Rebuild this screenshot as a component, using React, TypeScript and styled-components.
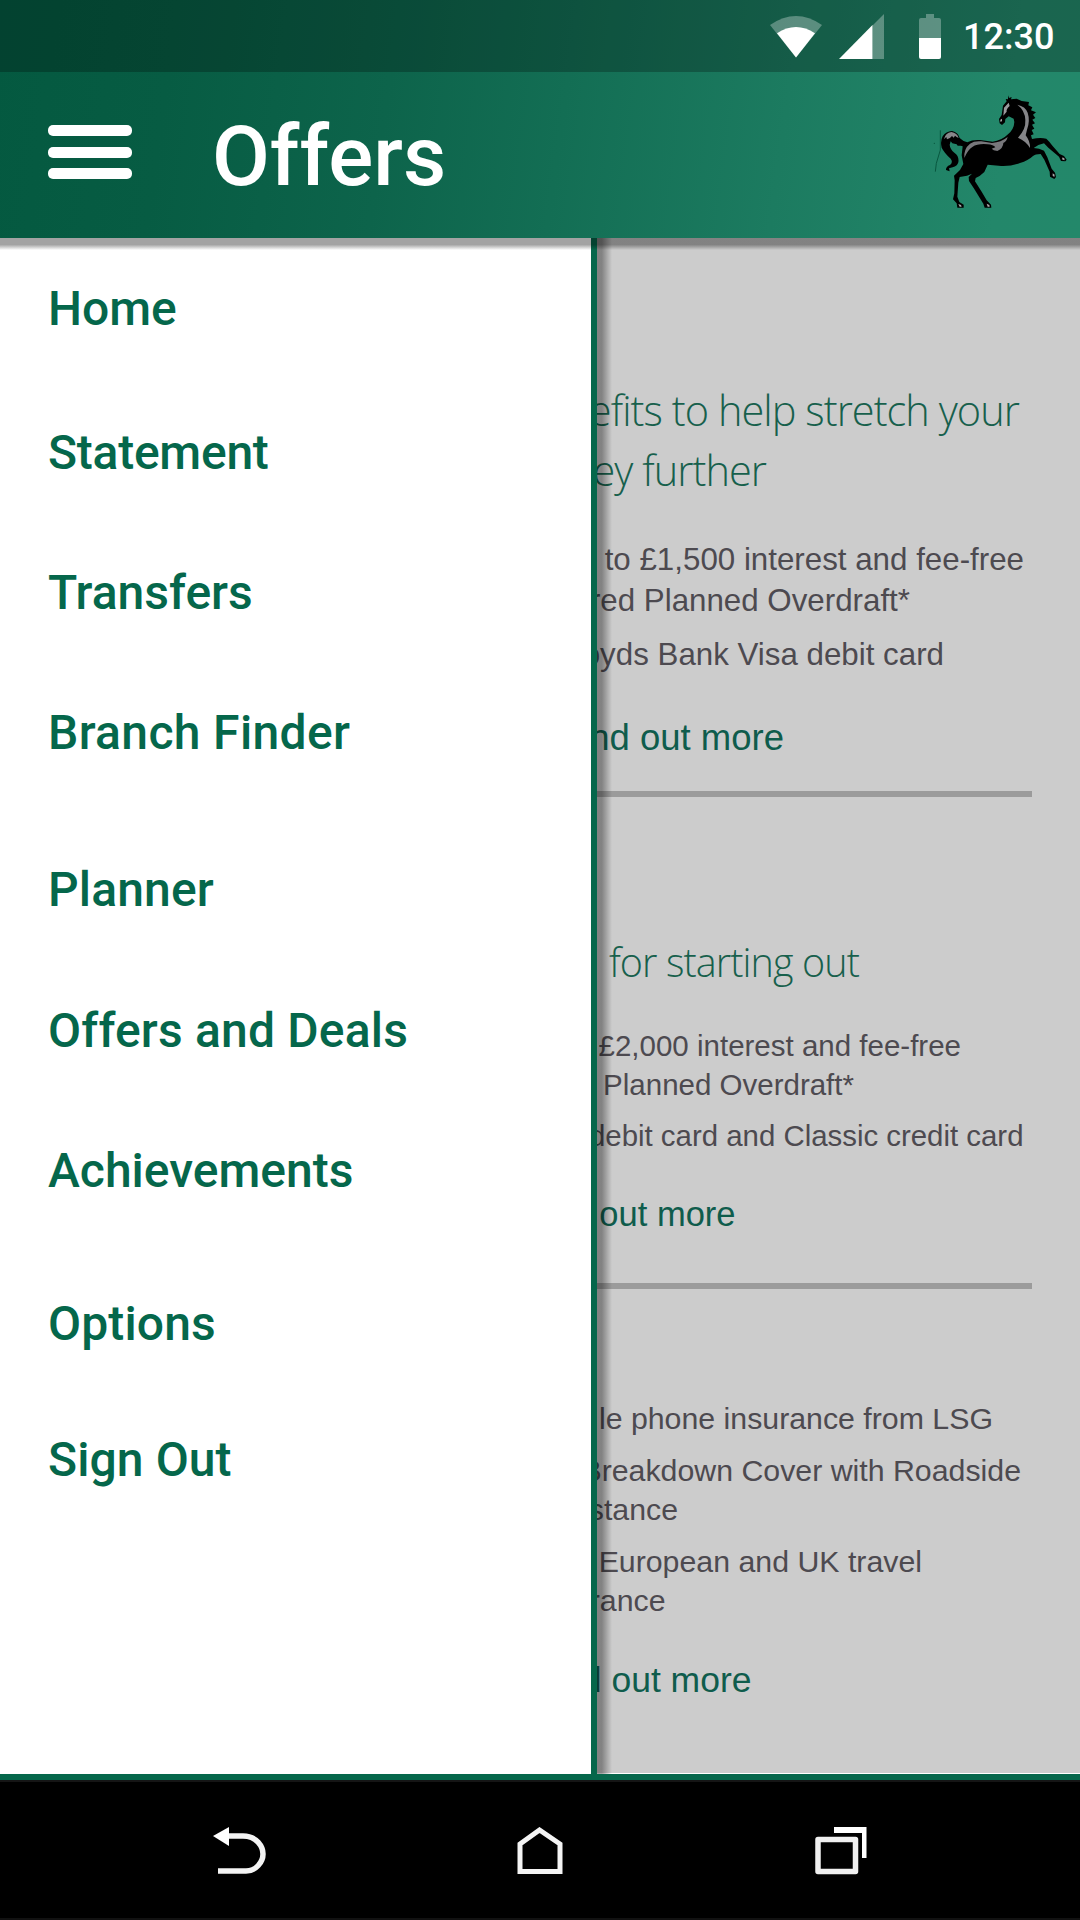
import React from "react";
import styled, { createGlobalStyle } from "styled-components";

const GREEN = "#05674b";

const Global = createGlobalStyle`
  * { box-sizing: border-box; }
  body { margin: 0; background: #000; font-family: Roboto, "Liberation Sans", sans-serif; }
`;

const Screen = styled.div`
  width: 1080px;
  height: 1920px;
  display: flex;
  flex-direction: column;
  overflow: hidden;
`;

const Top = styled.header`
  position: relative;
  z-index: 2;
  height: 238px;
  flex: none;
  display: flex;
  flex-direction: column;
  color: #fff;
  background: linear-gradient(98deg, #045940 0%, #075c43 16%, #0d644b 36%, #136e54 52%, #1c7b60 72%, #23876a 92%, #23886a 100%);

  &::after {
    content: "";
    position: absolute;
    left: 0;
    right: 0;
    top: 100%;
    height: 12px;
    background: linear-gradient(rgba(0, 0, 0, 0.36) 0 55%, rgba(0, 0, 0, 0));
  }
`;

const StatusBar = styled.div`
  height: 72px;
  display: flex;
  background: rgba(0, 0, 0, 0.25);
  padding-left: 770px;
`;

const Clock = styled.time`
  font-size: 36px;
  font-weight: 500;
  line-height: 74px;
  margin-left: 20px;
`;

const AppBar = styled.div`
  flex: 1;
  display: flex;
  align-items: flex-start;
`;

const MenuButton = styled.button`
  width: 84px;
  height: 54px;
  margin: 53px 0 0 48px;
  padding: 0;
  border: 0;
  background: none;
  display: flex;
  flex-direction: column;
  justify-content: space-between;
`;

const Bar = styled.span`
  display: block;
  height: 11px;
  border-radius: 5px;
  background: #fff;
`;

const Title = styled.h1`
  flex: 1;
  margin: 35px 0 0 80px;
  font-size: 84px;
  font-weight: 500;
  line-height: 100px;
`;

const Logo = styled.svg`
  width: 160px;
  height: 158px;
  margin-top: 8px;
`;

const Body = styled.div`
  height: 1536px;
  flex: none;
  display: flex;
`;

const Drawer = styled.nav`
  position: relative;
  z-index: 1;
  width: 597px;
  flex: none;
  padding: 43px 0 0 48px;
  background: #fff;
  border-right: 6px solid ${GREEN};

  &::after {
    content: "";
    position: absolute;
    top: 0;
    bottom: 0;
    left: 597px;
    width: 15px;
    background: linear-gradient(90deg, rgba(0, 0, 0, 0.36) 0 32%, rgba(0, 0, 0, 0));
  }
`;

const Item = styled.a<{ $gap: number; $ls: number }>`
  display: block;
  margin-top: ${(p) => p.$gap}px;
  font-size: 48px;
  font-weight: 500;
  line-height: 56px;
  letter-spacing: ${(p) => p.$ls}px;
  color: ${GREEN};
`;

const Content = styled.main`
  flex: 1;
  min-width: 0;
  overflow: hidden;
  background: #ccc;
  border-bottom: 1px solid #fff;
`;

type LineProps = { $gap: number; $end: number; $size: number; $ls?: number };

const Line = styled.div<LineProps>`
  display: flex;
  justify-content: flex-end;
  margin-top: ${(p) => p.$gap}px;
  padding-right: ${(p) => 1080 - p.$end}px;
  font-family: "Liberation Sans", Arial, sans-serif;
  font-size: ${(p) => p.$size}px;
  line-height: 36px;
  letter-spacing: ${(p) => p.$ls ?? 0}px;
  white-space: nowrap;
  color: #4d4a50;
`;

const Heading = styled(Line)`
  font-family: "Open Sans", "Noto Sans", sans-serif;
  font-weight: 360;
  color: #17604c;
`;

const More = styled(Line)`
  color: #0f5c4c;
`;

const Rule = styled.hr<{ $gap: number }>`
  height: 6px;
  margin: ${(p) => p.$gap}px 48px 0 0;
  border: 0;
  background: #9b9b9b;
`;

const NavBar = styled.footer`
  height: 146px;
  flex: none;
  display: flex;
  padding: 47px 0 0 205px;
  background: #000;
  border-top: 6px solid ${GREEN};
  box-shadow: inset 0 2px #151515, inset 0 -2px #111;
`;

const NavIcon = styled.svg<{ $gap?: number }>`
  width: 70px;
  height: 56px;
  margin-left: ${(p) => p.$gap ?? 0}px;
`;

const items: [string, number, number][] = [
  ["Home", 0, 0],
  ["Statement", 88, -0.25],
  ["Transfers", 84, 0],
  ["Branch Finder", 84, 0.35],
  ["Planner", 101, 0.15],
  ["Offers and Deals", 85, 0.18],
  ["Achievements", 84, 0],
  ["Options", 97, 0.15],
  ["Sign Out", 80, 0.1],
];

const StatusIcons = () => (
  <svg width="173" height="72" viewBox="770 0 173 72">
    <path d="M770 25 Q796 7 822 25 L796 57.5Z" fill="#fff" opacity=".3" />
    <path d="M777 33.3 Q796 20.500 815 33.300 L796 57.500Z" fill="#fff" />
    <path d="M872.500 59V25.500L884 14V59Z" fill="#fff" opacity=".3" />
    <path d="M839 59L872.500 25V59Z" fill="#fff" />
    <path d="M926 14h8v4h5q2 0 2 2v18h-22v-18q0-2 2-2h5Z" fill="#fff" opacity=".3" />
    <path d="M919 38h22v19q0 2-2 2h-18q-2 0-2-2Z" fill="#fff" />
  </svg>
);

const Horse = () => (
  <Logo viewBox="0 0 480 474">
    <path d="M61 151V210L49 250L46 275" fill="none" stroke="#08573f" strokeWidth="3" />
    <circle cx="43" cy="190" r="2" fill="#08573f" />
    <path
      d="M264 46L267 54L275 51L273 58L290 56L305 63L327 66L325 76L337 82L333 91L348 97L339 104L346 114L337 119L345 130L336 134L343 146L335 150L341 163L333 166L336 177
         Q360 172 379 176Q388 184 396 196L419 222L432 228L440 239L436 244L423 243L417 230L385 203L372 190Q354 193 341 204
         Q358 204 372 212L382 232L395 266L405 278L408 291L403 297L390 290L389 275L373 239L362 222Q346 222 338 229
         Q325 242 300 249Q270 260 236 257L203 254L193 276Q180 289 167 294L165 304L185 335L200 361L213 374L214 383H194L190 371L161 324L147 303L146 291L156 281
         L141 287L119 291L115 308L112 350L118 366L131 374V383H112L110 370L99 358L103 340L104 301L102 287L120 270L130 252L125 226L128 199L122 197L113 197L110 193L97 190L92 184
         L89 194Q90 207 103 218Q118 228 115 247Q112 259 98 262L87 265L89 274L78 270Q77 260 90 255Q100 247 92 236Q73 219 65 203Q60 184 68 169Q78 154 96 153Q115 157 119 174
         Q130 185 142 187Q158 178 180 180L218 185Q245 182 264 163Q282 148 283 126L281 116L266 109L256 117L255 127L246 135L239 130L237 117L245 105L249 77L260 64L257 57L264 58Z"
      fill="#000"
    />
    <path d="M72 177Q76 159 94 156Q112 159 116 174Q109 171 105 167L101 173L96 168Q90 176 81 178L79 171Z" fill="#87878a" />
    <path d="M133 234Q131 206 150 191Q163 182 184 184L216 189Q243 187 263 171Q260 184 250 189Q250 204 232 213Q219 211 215 206L226 202Q220 194 203 193Q174 190 157 201Q143 210 133 234Z" fill="#77777b" />
    <path d="M292 74Q316 79 323 98Q331 122 321 149L317 166Q331 184 330 204Q318 183 294 173Q318 148 316 120Q315 91 292 74Z" fill="#858588" />
    <path d="M266 68L269 78Q258 87 260 95L250 107L252 83Z" fill="#9a9a9d" />
    <path d="M241 119L246 116V124L241 125ZM428 232L434 236L433 241L426 238ZM398 280L404 284L403 291L398 287ZM115 372L123 375L125 380H119ZM200 371L208 375L209 380H203Z" fill="#aaa" />
  </Logo>
);

export default function App() {
  return (
    <Screen>
      <Global />
      <Top>
        <StatusBar>
          <StatusIcons />
          <Clock>12:30</Clock>
        </StatusBar>
        <AppBar>
          <MenuButton aria-label="Menu">
            <Bar />
            <Bar />
            <Bar />
          </MenuButton>
          <Title>Offers</Title>
          <Horse />
        </AppBar>
      </Top>
      <Body>
        <Drawer>
          {items.map(([label, gap, ls]) => (
            <Item key={label} $gap={gap} $ls={ls}>{label}</Item>
          ))}
        </Drawer>
        <Content>
          <Heading $gap={154} $end={1019} $size={41.5} $ls={-0.95}>efits to help stretch your</Heading>
          <Heading $gap={24} $end={766} $size={41.5} $ls={-0.95}>ey further</Heading>
          <Line $gap={54} $end={1024} $size={31.3}>to £1,500 interest and fee-free</Line>
          <Line $gap={5} $end={910} $size={31.3}>red Planned Overdraft*</Line>
          <Line $gap={18} $end={944} $size={31.3}>oyds Bank Visa debit card</Line>
          <More $gap={47} $end={784} $size={36.5}>nd out more</More>
          <Rule $gap={35} />
          <Heading $gap={147} $end={859} $size={39.5} $ls={-0.9}>for starting out</Heading>
          <Line $gap={48} $end={961} $size={29.5}>£2,000 interest and fee-free</Line>
          <Line $gap={3} $end={854} $size={29.5}>Planned Overdraft*</Line>
          <Line $gap={15} $end={1023.5} $size={29.4}>debit card and Classic credit card</Line>
          <More $gap={42} $end={735.5} $size={34.5}>out more</More>
          <Rule $gap={51} />
          <Line $gap={112} $end={993} $size={30.3}>le phone insurance from LSG</Line>
          <Line $gap={16} $end={1021} $size={30.3}>Breakdown Cover with Roadside</Line>
          <Line $gap={3} $end={678} $size={30.3}>stance</Line>
          <Line $gap={16} $end={922} $size={30.3}>European and UK travel</Line>
          <Line $gap={3} $end={665.5} $size={30.3}>rance</Line>
          <More $gap={43} $end={751.5} $size={35.5}>d out more</More>
        </Content>
      </Body>
      <NavBar>
        <NavIcon viewBox="205 1827 70 56">
          <path d="M227 1836H243C257 1836 263 1847 263 1854C263 1862 256 1871 246 1871H218" fill="none" stroke="#f4f4f4" strokeWidth="5.500" />
          <path d="M213 1836L229 1827V1846Z" fill="#fff" />
        </NavIcon>
        <NavIcon $gap={230} viewBox="505 1827 70 56">
          <path d="M520 1871.500V1844L539.500 1830L560 1844V1871.500Z" fill="none" stroke="#f4f4f4" strokeWidth="5" />
        </NavIcon>
        <NavIcon $gap={230} viewBox="805 1827 70 56">
          <path d="M818 1839.500H855.500V1871.500H818Z" fill="none" stroke="#f0f0f0" strokeWidth="5.500" strokeLinejoin="round" />
          <path d="M834 1827H866.500V1858H862V1833H834Z" fill="#fff" />
        </NavIcon>
      </NavBar>
    </Screen>
  );
}
